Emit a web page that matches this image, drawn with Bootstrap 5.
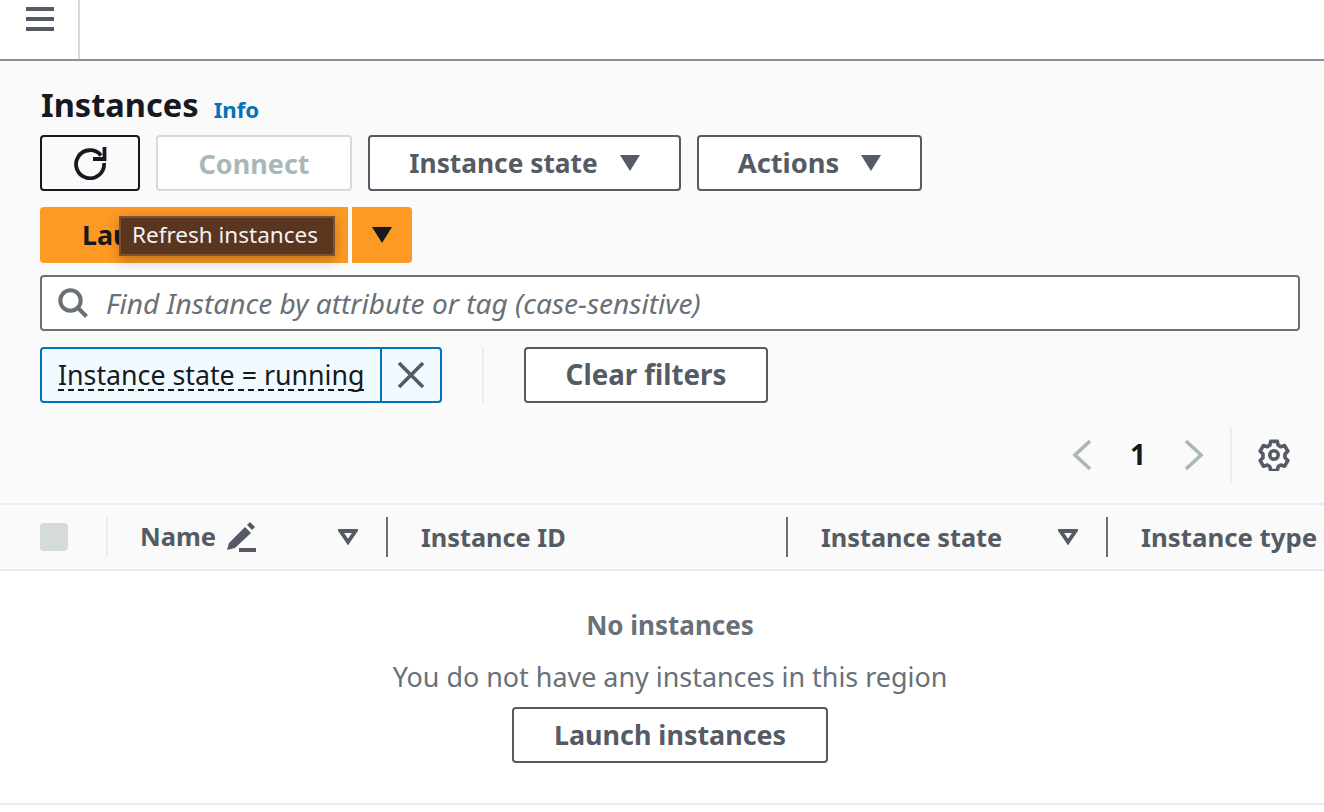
<!DOCTYPE html>
<html lang="en">
<head>
<meta charset="utf-8">
<title>Instances</title>
<link href="https://cdn.jsdelivr.net/npm/bootstrap@5.3.0/dist/css/bootstrap.min.css" rel="stylesheet">
<style>
html,body{height:100%;overflow:hidden}
body{background:#fff;font-family:"Noto Sans","Open Sans",sans-serif;color:#16191f;font-size:28px;line-height:1.2}
.topbar{height:61px;border-bottom:2px solid #879596;background:#fff;box-shadow:0 1px 2px rgba(0,0,0,.12);position:relative}
.menu-cell{width:80px;height:59px;border-right:2px solid #d5dbdb}
.menu-ic{margin:7px 0 0 2px}
.panel{background:#fafafa;height:442px;padding:20px 24px 0 40px;position:relative}
.title-row{height:48px;margin-bottom:6px}
.page-title{font-size:32.6px;font-weight:700;margin:0 0 0 1px;line-height:40px}
.info-link{font-size:22.2px;font-weight:700;color:#0073bb;text-decoration:none;margin-left:15px;line-height:40px;padding-top:10px}
.aws-btn{height:56px;border:2px solid #545b64;border-radius:4px;background:#fff;color:#545b64;font-size:26.8px;font-weight:700;display:inline-flex;align-items:center;justify-content:center;padding:0;line-height:1}
.refresh{width:100px;border-color:#16191f;background:#fafafa}
.connect{width:196px;border-color:#d5dbdb;color:#aab7b8;font-size:27px}
.state-btn{width:313px;gap:22px;font-size:26.3px}
.actions-btn{width:225px;gap:22px;font-size:27.3px}
.launch{width:308px;background:#fd9a25;border:0;color:#16191f;border-radius:4px 0 0 4px;justify-content:flex-start;padding-left:42px;overflow:hidden}
.launch-drop{width:60px;background:#fd9a25;border:0;border-radius:0 4px 4px 0;margin-left:4px}
.row-gap{gap:16px;margin-bottom:16px}
.launch-row{margin-bottom:16px}
.search-box{height:56px;border:2px solid #687078;border-radius:4px;background:#fff;margin:-4px 0 16px;padding-left:16px;width:1260px;gap:18px;color:#687078;font-style:italic;font-size:28.1px}
.search-box span{padding-top:2px}
.token{height:56px;border:2px solid #0073bb;border-radius:4px;background:#f1faff;width:402px}
.token-label{width:338px;flex:none;padding:0 16px;font-size:26.75px;line-height:1.1;white-space:nowrap}
.token-label span{border-bottom:2px dashed #16191f;display:inline-block;line-height:31px;height:32px}
.token-x{width:60px;flex:none;height:100%;border-left:2px solid #0073bb}
.vrule{width:2px;height:56px;background:#eaeded;margin:0 40px}
.clear-btn{width:244px;font-size:27.7px}
.pager{height:56px;margin-top:24px;margin-right:-2px;padding-right:12px}
.page-num{font-size:28px;font-weight:700;width:92px;text-align:center}
.pager-rule{width:2px;height:56px;background:#eaeded;margin:0 26px 0 26px}
.tip{position:absolute;left:119px;top:155px;width:216px;height:40px;padding:0 4px 3px 0;background:#5a3520;border:2px solid #7d5130;color:#f2f3f3;font-size:22.5px;display:flex;align-items:center;justify-content:center;box-shadow:0 4px 12px rgba(0,0,0,.25);white-space:nowrap}
.tbl-head{height:68px;background:#fafafa;border-top:2px solid #eaeded;border-bottom:2px solid #eaeded;color:#545b64;font-size:25.5px;font-weight:700;overflow:hidden;white-space:nowrap}
.cell{height:40px;display:flex;align-items:center;flex:none;padding-left:33px;border-right:2px solid #687078}
.c1{width:108px;padding-left:40px;border-right-color:#eaeded}
.c2{width:280px}
.name-label{margin-top:-2px;margin-left:-1px}
.pencil-ic{margin-left:10px}
.c3{width:400px;font-size:25.3px}
.c4{width:320px;font-size:25.3px}
.c5{border:0;width:216px;font-size:25.8px}
.fake-check{width:28px;height:28px;border-radius:4px;background:#d5dbdb;display:block}
.filter-ic{margin-left:auto;margin-right:28px}
.empty{height:234px;border-bottom:2px solid #eaeded;padding:36px 0 0 16px;text-align:center;color:#687078}
.empty-title{font-size:26px;font-weight:700;line-height:36px;margin-bottom:16px}
.empty-sub{font-size:26.9px;line-height:36px;margin-bottom:12px}
.launch-all{width:316px;font-size:26.9px}
</style>
</head>
<body>
<header class="topbar d-flex">
  <div class="menu-cell d-flex justify-content-center">
    <svg class="menu-ic" width="28" height="24" viewBox="0 0 28 24" aria-hidden="true"><path d="M0 0h28v4H0zM0 10h28v4H0zM0 20h28v4H0z" fill="#545b64"/></svg>
  </div>
</header>
<main>
<section class="panel">
  <div class="title-row d-flex align-items-center">
    <h1 class="page-title">Instances</h1>
    <a class="info-link" href="#">Info</a>
  </div>
  <div class="d-flex row-gap">
    <button class="aws-btn refresh" type="button" aria-label="Refresh">
      <svg width="34" height="34" viewBox="0 0 34 34" fill="none" stroke="#16191f" stroke-width="3.8"><path d="M28 9.5A14 14 0 1 0 31 17"/><path d="M31.5 1v12H20"/></svg>
    </button>
    <button class="aws-btn connect" type="button">Connect</button>
    <button class="aws-btn state-btn" type="button">Instance state <svg width="20" height="16" viewBox="0 0 20 16"><path d="M0 0h20L10 16z" fill="#545b64"/></svg></button>
    <button class="aws-btn actions-btn" type="button">Actions <svg width="20" height="16" viewBox="0 0 20 16"><path d="M0 0h20L10 16z" fill="#545b64"/></svg></button>
  </div>
  <div class="launch-row d-flex">
    <button class="aws-btn launch" type="button">Launch instances</button>
    <button class="aws-btn launch-drop" type="button"><svg width="20" height="16" viewBox="0 0 20 16"><path d="M0 0h20L10 16z" fill="#16191f"/></svg></button>
  </div>
  <div class="tip">Refresh instances</div>
  <div class="search-box d-flex align-items-center">
    <svg width="30" height="30" viewBox="0 0 30 30" fill="none" stroke="#687078" stroke-width="4"><circle cx="12.5" cy="12.5" r="10.2"/><path d="M20 20l8.5 8.5"/></svg>
    <span>Find Instance by attribute or tag (case-sensitive)</span>
  </div>
  <div class="d-flex align-items-center">
    <div class="token d-flex align-items-center">
      <div class="token-label"><span>Instance state = running</span></div>
      <div class="token-x d-flex align-items-center justify-content-center">
        <svg width="28" height="28" viewBox="0 0 28 28" stroke="#545b64" stroke-width="3.6" aria-hidden="true"><path d="M2 2l24 24M26 2L2 26"/></svg>
      </div>
    </div>
    <div class="vrule"></div>
    <button class="aws-btn clear-btn" type="button">Clear filters</button>
  </div>
  <div class="pager d-flex align-items-center justify-content-end">
    <svg width="20" height="32" viewBox="0 0 20 32" fill="none" stroke="#aab7b8" stroke-width="3.6"><path d="M18 2L3 16l15 14"/></svg>
    <span class="page-num">1</span>
    <svg width="20" height="32" viewBox="0 0 20 32" fill="none" stroke="#aab7b8" stroke-width="3.6"><path d="M2 2l15 14L2 30"/></svg>
    <div class="pager-rule"></div>
    <svg width="32" height="32" viewBox="0 0 34 34" fill="none" stroke="#545b64" aria-hidden="true"><circle cx="17" cy="17" r="4.5" stroke-width="3.8"/><path stroke-width="3.8" stroke-linejoin="round" d="M13.5 2.5h7l1 4.2 2.6 1.5 4.2-1.2 3.4 6-3 3v3.9l3 3-3.4 6-4.2-1.2-2.6 1.5-1 4.3h-7l-1-4.3-2.6-1.5-4.2 1.2-3.4-6 3-3v-3.9l-3-3 3.4-6 4.2 1.2 2.6-1.5z"/></svg>
  </div>
</section>
<div class="tbl-head d-flex align-items-center">
  <div class="cell c1"><span class="fake-check"></span></div>
  <div class="cell c2"><span class="name-label">Name</span>
    <svg class="pencil-ic" width="30" height="30" viewBox="0 0 30 30" aria-hidden="true" fill="#545b64"><path d="M1 28l2-7L19 5l6 6L9 26z"/><path d="M21 3l3-3 5 5-3 3z"/><path d="M13 26h17v4H13z"/></svg>
    <svg class="filter-ic" width="20" height="16" viewBox="0 0 20 16" fill="none" stroke="#545b64" stroke-width="3.8"><path d="M2.5 2h15L10 13z"/></svg>
  </div>
  <div class="cell c3">Instance ID</div>
  <div class="cell c4">Instance state
    <svg class="filter-ic" width="20" height="16" viewBox="0 0 20 16" fill="none" stroke="#545b64" stroke-width="3.8"><path d="M2.5 2h15L10 13z"/></svg>
  </div>
  <div class="cell c5">Instance type</div>
</div>
<section class="empty">
  <div class="empty-title">No instances</div>
  <div class="empty-sub">You do not have any instances in this region</div>
  <button class="aws-btn launch-all" type="button">Launch instances</button>
</section>
</main>
</body>
</html>
